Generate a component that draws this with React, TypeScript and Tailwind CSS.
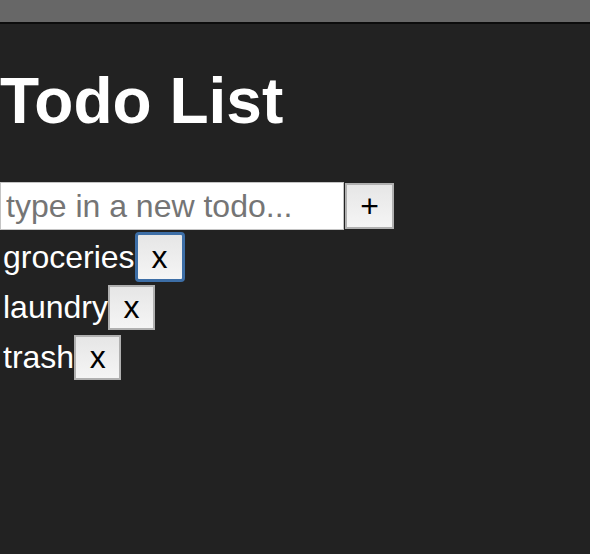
import React, { useState } from 'react';

const font = { fontFamily: '"Liberation Sans", Arial, sans-serif' };

export default function App(): React.JSX.Element {
  const [todos, setTodos] = useState<string[]>(['groceries', 'laundry', 'trash']);
  const [text, setText] = useState('');

  const addTodo = () => {
    if (text.trim() === '') return;
    setTodos([...todos, text.trim()]);
    setText('');
  };

  const removeTodo = (i: number) => {
    setTodos(todos.filter((_, idx) => idx !== i));
  };

  return (
    <div className="min-h-screen bg-[#222222] text-white font-['Liberation_Sans',Arial,sans-serif]">
      <div className="h-[24px] bg-[#676767] border-b-2 border-[#0c0c0c]"></div>

      <h1 className="mt-[45px] text-[64px] font-bold leading-none">Todo List</h1>

      <div className="mt-[49px] flex items-center">
        <input
          type="text"
          value={text}
          placeholder="type in a new todo..."
          onChange={(e) => setText(e.target.value)}
          className="w-[344px] h-[48px] bg-white border border-[#c4c4c4] px-[5px] text-[32px] text-black placeholder:text-[#757575] outline-none"
        />
        <button
          type="button"
          onClick={addTodo}
          className="ml-px h-[46px] w-[49px] border-2 border-[#b0b0b0] bg-gradient-to-b from-[#e6e6e6] to-[#f5f5f5] text-[32px] leading-none text-black"
        >
          +
        </button>
      </div>

      <ul className="mt-[2px]">
        {todos.map((todo, i) => (
          <li key={todo + i} className="flex h-[50px] items-center text-[32px] pl-[3px]">
            <span>{todo}</span>
            <button
              type="button"
              onClick={() => removeTodo(i)}
              className={
                i === 0
                  ? 'h-[50px] w-[50px] rounded-[4px] border-[3px] border-[#3d6ea6] bg-gradient-to-b from-[#e6e6e6] to-[#f5f5f5] text-[32px] leading-none text-black'
                  : 'h-[45px] w-[47px] border-2 border-[#b0b0b0] bg-gradient-to-b from-[#e6e6e6] to-[#f5f5f5] text-[32px] leading-none text-black'
              }
              style={font}
            >
              x
            </button>
          </li>
        ))}
      </ul>
    </div>
  );
}
